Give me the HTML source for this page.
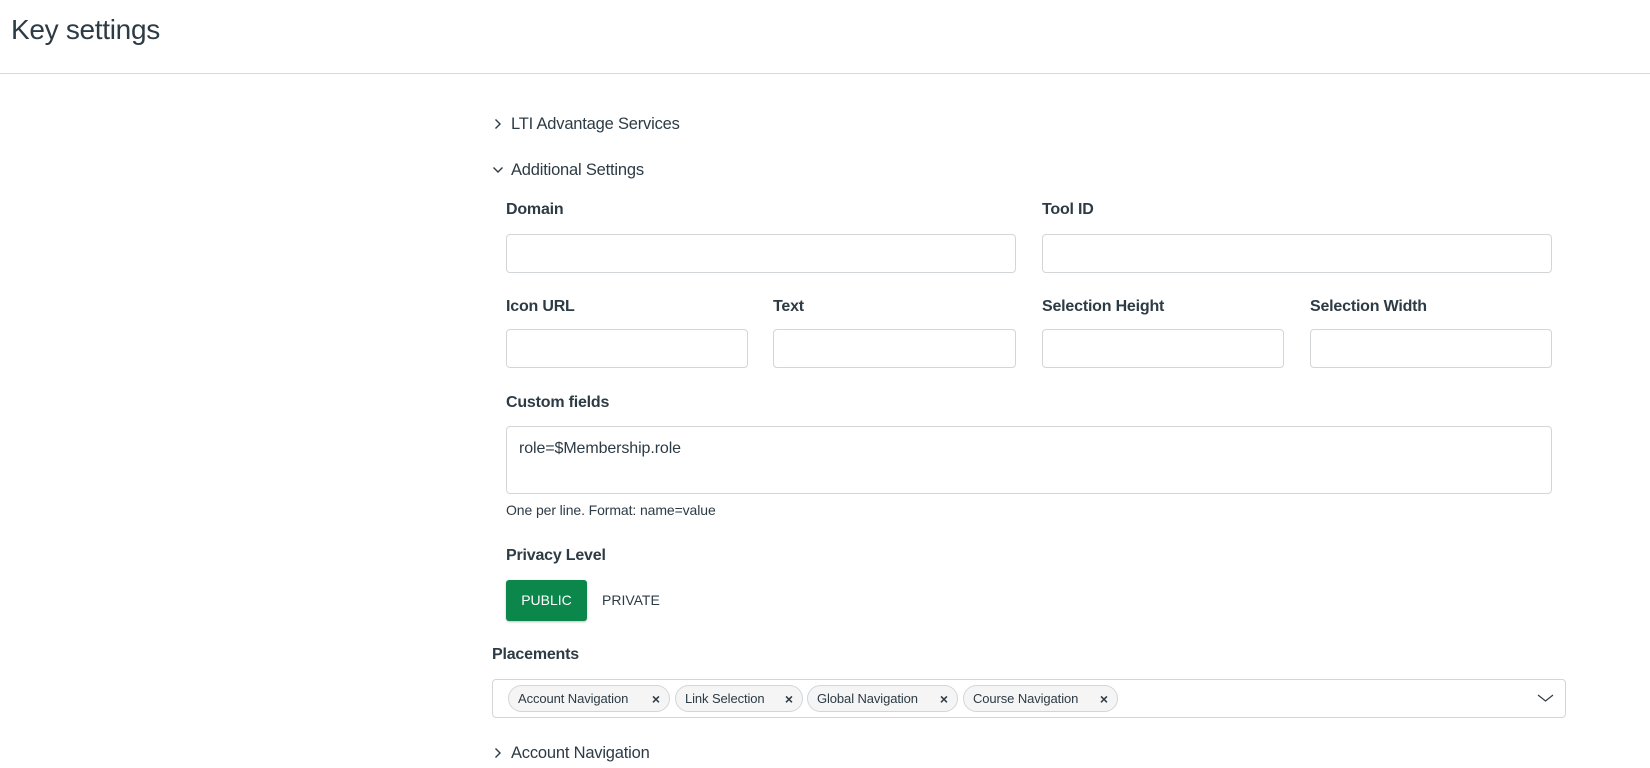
<!DOCTYPE html>
<html><head><style>
*{box-sizing:border-box;margin:0;padding:0}
body{width:1650px;height:768px;overflow:hidden;background:#fff;font-family:"Liberation Sans",sans-serif;color:#2d3b45;position:relative}
.a{position:absolute;white-space:nowrap}
.hdr{position:absolute;left:0;top:0;width:1650px;height:74px;border-bottom:1px solid #d7dadd}
.lbl{position:absolute;font-weight:bold;font-size:16px;line-height:20px;letter-spacing:-0.2px}
.in{position:absolute;border:1px solid #d2d6d9;border-radius:4px;height:39px;background:#fff}
.sec{position:absolute;font-size:16.5px;line-height:20px;letter-spacing:-0.2px}
.chip{position:absolute;top:685px;height:27px;border:1px solid #d2d6d9;border-radius:14px;background:#f5f5f5;font-size:13px;line-height:25px;padding-left:9px;letter-spacing:-0.1px}
.chip b{position:absolute;right:9px;top:1px;font-weight:bold;font-size:14px}
</style></head><body>
<div class="hdr"></div>
<div class="a" style="left:11px;top:13px;font-size:28px;line-height:34px;letter-spacing:-0.3px">Key settings</div>

<svg class="a" style="left:492px;top:117px" width="12" height="14" viewBox="0 0 12 14"><path d="M3.5 2.5l4.5 4.5-4.5 4.5" fill="none" stroke="#2d3b45" stroke-width="1.4"/></svg>
<div class="sec" style="left:511px;top:114px">LTI Advantage Services</div>

<svg class="a" style="left:491px;top:164px" width="14" height="12" viewBox="0 0 14 12"><path d="M2.5 3.5l4.5 4.5 4.5-4.5" fill="none" stroke="#2d3b45" stroke-width="1.4"/></svg>
<div class="sec" style="left:511px;top:160px">Additional Settings</div>

<div class="lbl" style="left:506px;top:200px">Domain</div>
<div class="lbl" style="left:1042px;top:200px">Tool ID</div>
<div class="in" style="left:506px;top:234px;width:510px"></div>
<div class="in" style="left:1042px;top:234px;width:510px"></div>

<div class="lbl" style="left:506px;top:297px">Icon URL</div>
<div class="lbl" style="left:773px;top:297px">Text</div>
<div class="lbl" style="left:1042px;top:297px">Selection Height</div>
<div class="lbl" style="left:1310px;top:297px">Selection Width</div>
<div class="in" style="left:506px;top:329px;width:242px"></div>
<div class="in" style="left:773px;top:329px;width:243px"></div>
<div class="in" style="left:1042px;top:329px;width:242px"></div>
<div class="in" style="left:1310px;top:329px;width:242px"></div>

<div class="lbl" style="left:506px;top:393px">Custom fields</div>
<div class="in" style="left:506px;top:426px;width:1046px;height:68px"></div>
<div class="a" style="left:519px;top:439px;font-size:16px;line-height:20px;letter-spacing:-0.1px">role=$Membership.role</div>
<div class="a" style="left:506px;top:502px;font-size:14px;line-height:17px;letter-spacing:-0.1px">One per line. Format: name=value</div>

<div class="lbl" style="left:506px;top:546px">Privacy Level</div>
<div class="a" style="left:506px;top:580px;width:81px;height:41px;background:#0b874b;border-radius:3px;color:#fff;font-size:14px;line-height:41px;text-align:center;box-shadow:0 1px 2px rgba(0,0,0,.25)">PUBLIC</div>
<div class="a" style="left:602px;top:591px;font-size:14px;line-height:18px">PRIVATE</div>

<div class="lbl" style="left:492px;top:645px">Placements</div>
<div class="in" style="left:492px;top:679px;width:1074px;height:39px"></div>
<div class="chip" style="left:508px;width:162px">Account Navigation<b>×</b></div>
<div class="chip" style="left:675px;width:128px">Link Selection<b>×</b></div>
<div class="chip" style="left:807px;width:151px">Global Navigation<b>×</b></div>
<div class="chip" style="left:963px;width:155px">Course Navigation<b>×</b></div>
<svg class="a" style="left:1537px;top:692px" width="17" height="12" viewBox="0 0 17 12"><path d="M1 3l7.5 6L16 3" fill="none" stroke="#2d3b45" stroke-width="1.2"/></svg>

<svg class="a" style="left:492px;top:746px" width="12" height="14" viewBox="0 0 12 14"><path d="M3.5 2.5l4.5 4.5-4.5 4.5" fill="none" stroke="#2d3b45" stroke-width="1.4"/></svg>
<div class="sec" style="left:511px;top:743px">Account Navigation</div>
</body></html>
